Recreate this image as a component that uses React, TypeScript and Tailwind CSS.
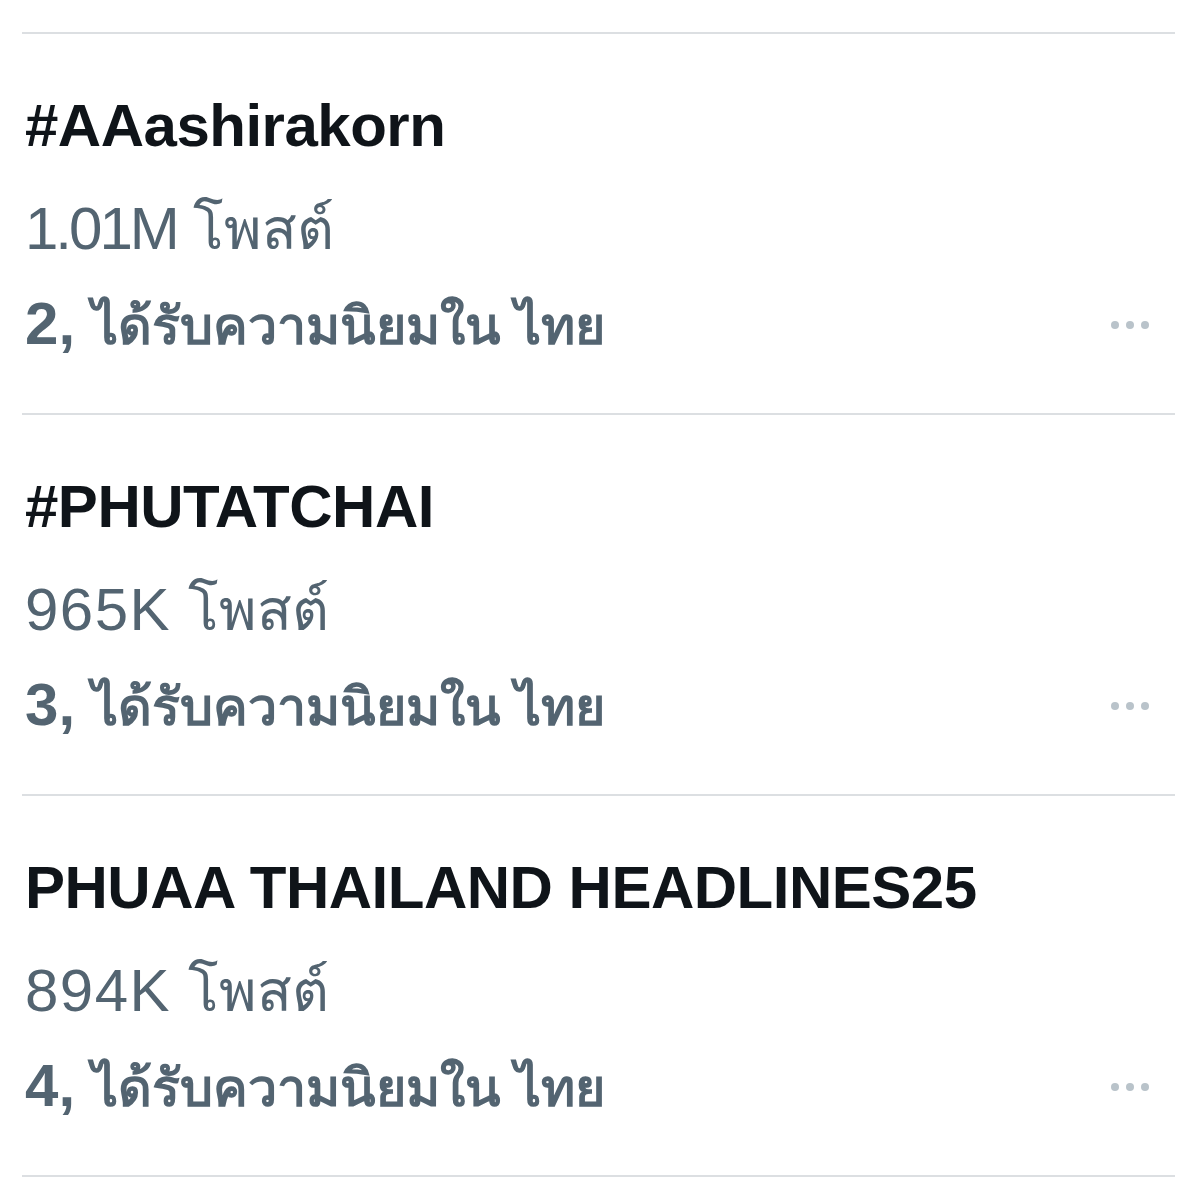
const trends = [
  { rank: 2, name: "#AAashirakorn", posts: "1.01M", postsClass: "tracking-[-3px]" },
  { rank: 3, name: "#PHUTATCHAI", posts: "965K", postsClass: "tracking-[1.5px]" },
  { rank: 4, name: "PHUAA THAILAND HEADLINES25", posts: "894K", postsClass: "tracking-[1.5px]" },
];

function MoreDots() {
  return (
    <div className="flex items-center gap-[7px] pr-[26px]">
      <span className="w-[8px] h-[8px] rounded-full bg-[#b9c3ca]" />
      <span className="w-[8px] h-[8px] rounded-full bg-[#b9c3ca]" />
      <span className="w-[8px] h-[8px] rounded-full bg-[#b9c3ca]" />
    </div>
  );
}

export default function App() {
  return (
    <div
      className="w-[1200px] h-[1196px] bg-white pt-[32px] pl-[22px] pr-[25px] overflow-hidden"
      style={{ fontFamily: '"Liberation Sans", "Noto Sans", sans-serif' }}
    >
      <div className="border-b-2 border-[#dcdfe2]">
        {trends.map((t) => (
          <section key={t.rank} className="border-t-2 border-[#dcdfe2] h-[381px] pl-[3px]">
            <div className="pt-[57px] text-[60px] leading-[70px] font-bold text-[#0f1419] tracking-[-0.5px]">
              {t.name}
            </div>
            <div className="mt-[33px] text-[60px] leading-[70px] text-[#536471]">
              <span className={t.postsClass}>{t.posts}</span>{" "}
              <span className="text-[57px]">โพสต์</span>
            </div>
            <div className="mt-[25px] flex items-center justify-between">
              <span className="text-[60px] leading-[70px] font-bold text-[#536471]">
                {t.rank}, <span className="text-[52px]">ได้รับความนิยมใน ไทย</span>
              </span>
              <MoreDots />
            </div>
          </section>
        ))}
      </div>
    </div>
  );
}
